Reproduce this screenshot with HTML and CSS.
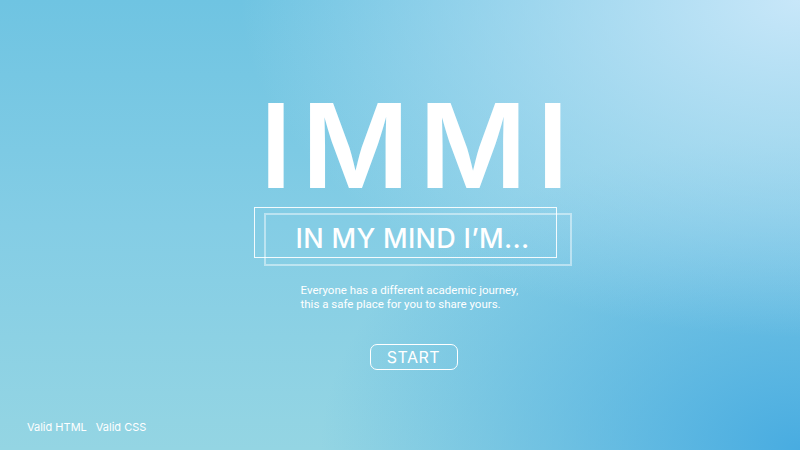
FILE: index.html
```html
<!DOCTYPE html>
<html lang="en">
<head>
<meta charset="utf-8">
<title>IMMI</title>
<link rel="stylesheet" href="styles.css">
</head>
<body>
<main class="hero">
  <h1 class="logo">IMMI</h1>
  <div class="tagline-wrap">
    <div class="tagline-shadow"></div>
    <h2 class="tagline">IN MY MIND I’M...</h2>
  </div>
  <p class="intro">Everyone has a different academic journey,<br>this a safe place for you to share yours.</p>
  <a class="start" href="#">START</a>
</main>
<footer class="footer">
  <a href="#">Valid HTML</a>
  <a href="#">Valid CSS</a>
</footer>
</body>
</html>
```
FILE: styles.css
```css
html, body {
  margin: 0;
  padding: 0;
  height: 100%;
}
body {
  width: 800px;
  height: 450px;
  overflow: hidden;
  color: #fff;
  font-family: Inter, "Open Sans", sans-serif;
  background:
    radial-gradient(ellipse 70% 75% at 100% 0%, rgba(200, 231, 249, 1) 0%, rgba(200, 231, 249, 0) 100%),
    radial-gradient(ellipse 60% 70% at 100% 100%, rgba(72, 172, 225, 1) 0%, rgba(72, 172, 225, 0) 100%),
    linear-gradient(to bottom, #6fc4e2 0%, #84cde5 50%, #94d5e3 100%);
  display: flex;
  flex-direction: column;
}
.hero {
  flex: 1;
  display: flex;
  flex-direction: column;
  align-items: center;
  padding-top: 85px;
}
.logo {
  margin: 0 0 0 38px;
  font-family: Inter, sans-serif;
  font-weight: 600;
  font-size: 117px;
  line-height: 121px;
  letter-spacing: 9.5px;
  height: 121px;
}
.tagline-wrap {
  position: relative;
  margin-top: 1px;
  margin-left: 11px;
}
.tagline {
  position: relative;
  margin: 0;
  width: 287px;
  height: 37px;
  padding: 12px 0 0 14px;
  border: 1px solid rgba(255, 255, 255, 0.9);
  font-family: Inter, sans-serif;
  font-weight: 500;
  font-size: 27px;
  line-height: 37px;
  text-align: center;
  letter-spacing: 0.3px;
  box-sizing: content-box;
}
.tagline-shadow {
  position: absolute;
  left: 10px;
  top: 6px;
  width: 304px;
  height: 49px;
  border: 2px solid rgba(255, 255, 255, 0.45);
}
.intro {
  margin: 25px 0 0 23px;
  font-family: Roboto, sans-serif;
  font-size: 11.5px;
  line-height: 14px;
  width: 222px;
}
.start {
  margin-top: 33px;
  margin-left: 27px;
  width: 86px;
  height: 24px;
  border: 1.5px solid #fff;
  border-radius: 7px;
  color: #fff;
  text-decoration: none;
  font-family: Inter, sans-serif;
  font-size: 16px;
  line-height: 24px;
  text-align: center;
  letter-spacing: 0.5px;
}
.footer {
  display: flex;
  gap: 9px;
  padding: 0 0 16px 27px;
  font-family: Inter, sans-serif;
  font-size: 11px;
  line-height: 14px;
}
.footer a {
  color: #fff;
  text-decoration: none;
}
```
